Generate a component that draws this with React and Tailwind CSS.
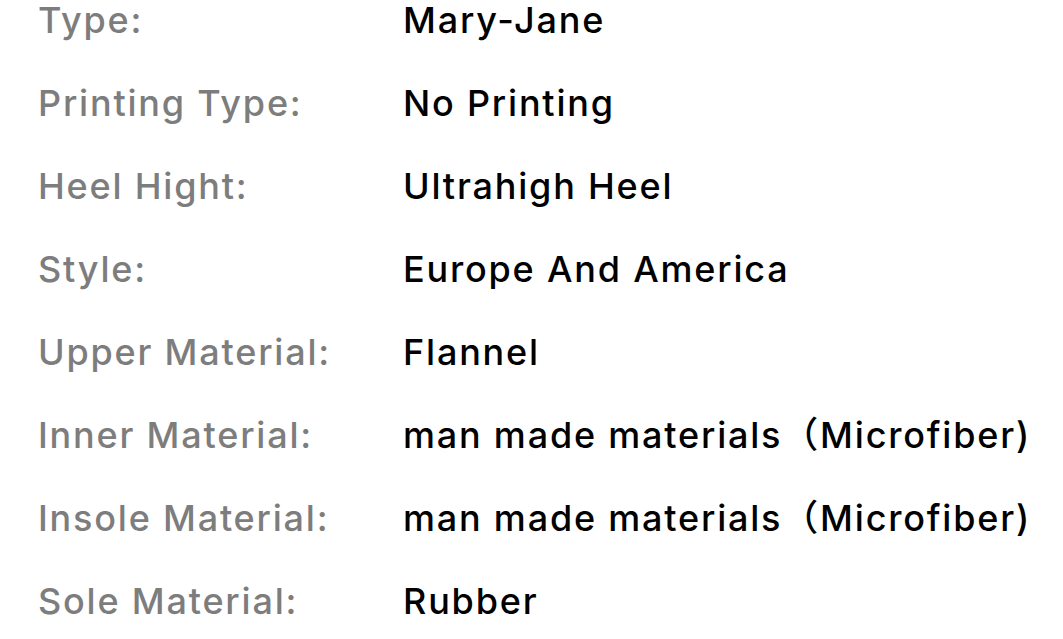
const rows = [
  ["Type:", "Mary-Jane"],
  ["Printing Type:", "No Printing"],
  ["Heel Hight:", "Ultrahigh Heel"],
  ["Style:", "Europe And America"],
  ["Upper Material:", "Flannel"],
  ["Inner Material:", "man made materials（Microfiber)"],
  ["Insole Material:", "man made materials（Microfiber)"],
  ["Sole Material:", "Rubber"],
];

export default function App() {
  return (
    <div
      className="w-[1063px] h-[639px] overflow-hidden bg-white"
      style={{ fontFamily: 'Inter, "Noto Sans CJK SC", sans-serif' }}
    >
      <div className="flex flex-col -mt-[21px] pl-[38px]">
        {rows.map(([label, value]) => (
          <div key={label} className="flex items-center h-[82.9px] text-[36px] tracking-[1.8px] font-medium whitespace-nowrap">
            <span className="w-[365px] shrink-0 text-[#7d7d7d]">{label}</span>
            <span className="text-black">{value}</span>
          </div>
        ))}
      </div>
    </div>
  );
}
